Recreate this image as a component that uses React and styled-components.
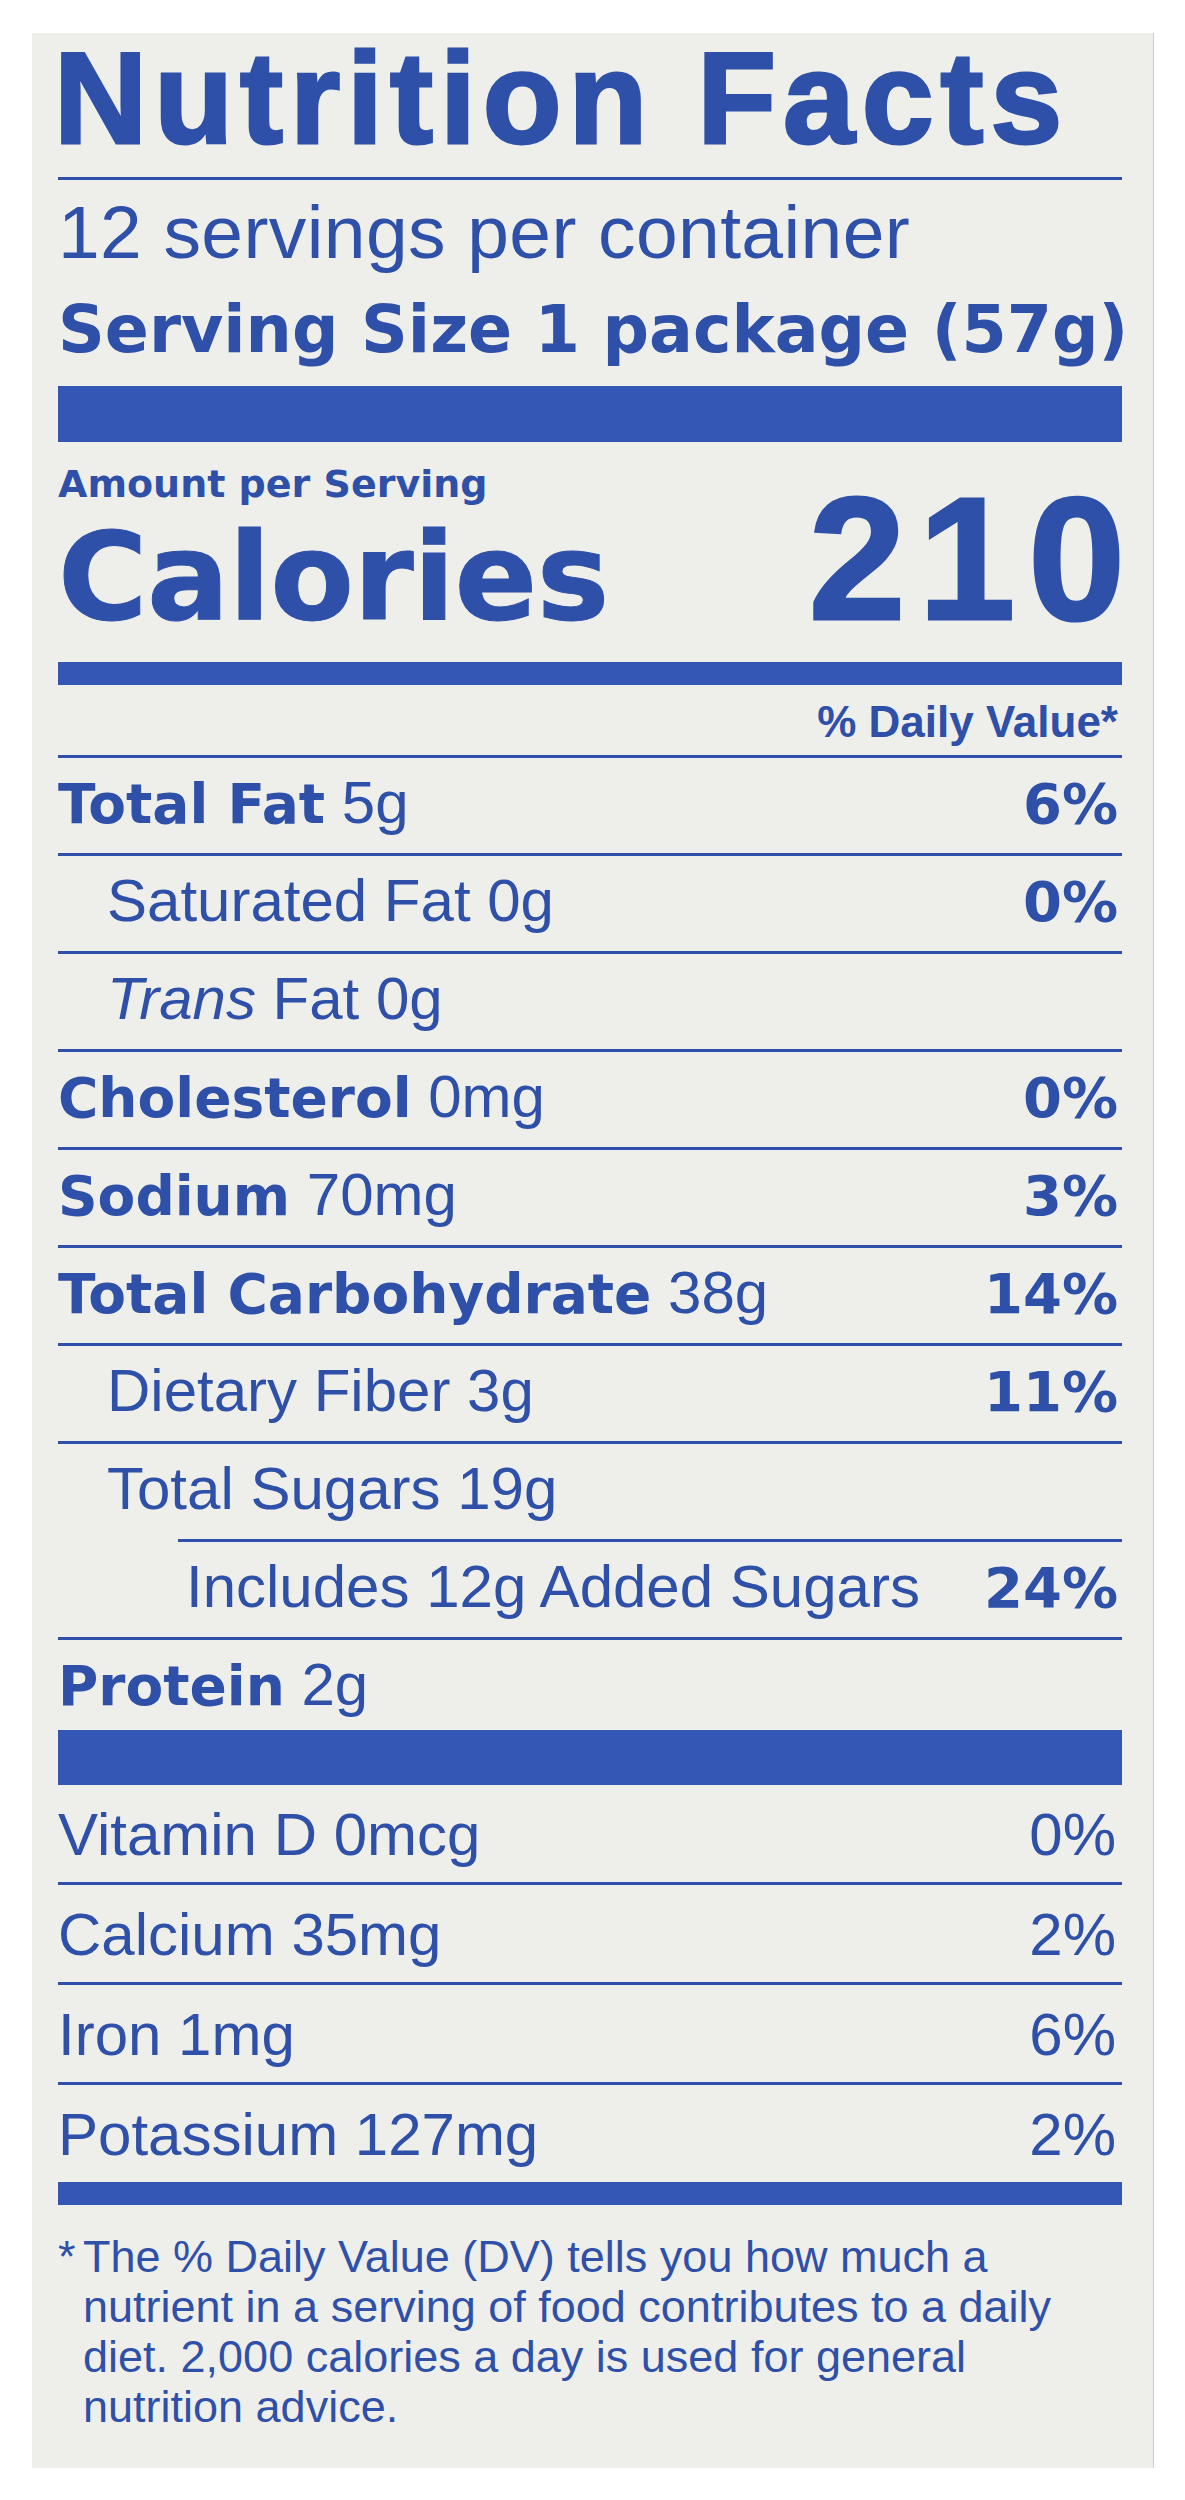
import React from 'react'
import styled, { createGlobalStyle } from 'styled-components'

const ink = '#2f50a8'
const barBlue = '#3457b6'
const paper = '#eeefeb'

const GlobalStyle = createGlobalStyle`
  body {
    margin: 0;
    background: #ffffff;
  }
`

const Page = styled.div`
  padding: 33px 0 32px 32px;
`

const Panel = styled.section`
  width: 1121px;
  box-sizing: border-box;
  padding: 0 31px 36px 26px;
  background: ${paper};
  color: ${ink};
  font-family: "Liberation Sans", Arial, sans-serif;
  box-shadow: 1px 0 0 #c9ccd3;
`

const Title = styled.h1`
  margin: 0 0 0 -4px;
  padding-top: 1px;
  font-size: 129px;
  line-height: 129px;
  font-weight: 700;
  letter-spacing: 7px;
  -webkit-text-stroke: 3px ${ink};
  white-space: nowrap;
`

const Rule = styled.div`
  height: 3px;
  margin-top: 14px;
  background: ${ink};
`

const Servings = styled.p`
  margin: 15px 0 0;
  font-size: 75px;
  line-height: 75px;
  letter-spacing: 0.4px;
  white-space: nowrap;
`

const ServingSize = styled.p`
  margin: 27px 0 0;
  font-family: "DejaVu Sans", sans-serif;
  font-weight: 700;
  font-size: 65px;
  line-height: 65px;
  white-space: nowrap;
`

const Bar = styled.div`
  height: ${p => p.$h}px;
  margin-top: ${p => p.$top || 0}px;
  background: ${barBlue};
`

const CaloriesBlock = styled.div`
  display: flex;
  justify-content: space-between;
  align-items: flex-end;
  margin-top: 23px;
`

const CaloriesLeft = styled.div`
  display: flex;
  flex-direction: column;
  gap: 13px;
`

const Amount = styled.div`
  font-family: "DejaVu Sans", sans-serif;
  font-weight: 700;
  font-size: 38px;
  line-height: 38px;
`

const CaloriesLabel = styled.div`
  font-family: "DejaVu Sans", sans-serif;
  font-weight: 700;
  font-size: 122px;
  line-height: 122px;
  letter-spacing: -0.5px;
  -webkit-text-stroke: 1px ${ink};
`

const CaloriesValue = styled.div`
  font-weight: 700;
  font-size: 174px;
  line-height: 158px;
  letter-spacing: 13px;
  margin-right: -16px;
  -webkit-text-stroke: 3px ${ink};
`

const DvHeader = styled.div`
  margin-top: 15px;
  padding: 0 4px 11px 0;
  text-align: right;
  font-weight: 700;
  font-size: 44px;
  line-height: 44px;
`

const Row = styled.div`
  display: flex;
  justify-content: space-between;
  align-items: baseline;
  box-sizing: border-box;
  height: ${p => p.$h || 98}px;
  margin-left: ${p => p.$inset || 0}px;
  padding: 15px 4px 0 ${p => p.$pad || 0}px;
  border-top: 3px solid ${ink};
  font-size: 60px;
  line-height: 60px;
  white-space: nowrap;
`

const Strong = styled.span`
  font-family: "DejaVu Sans", sans-serif;
  font-weight: 700;
  font-size: 55px;
`

const Italic = styled.span`
  font-style: italic;
`

const Dv = styled.span`
  font-family: "DejaVu Sans", sans-serif;
  font-weight: 700;
  font-size: 56px;
`

const VitRow = styled.div`
  display: flex;
  justify-content: space-between;
  align-items: baseline;
  box-sizing: border-box;
  height: ${p => (p.$first ? 97 : 100)}px;
  padding: 20px 6px 0 0;
  border-top: ${p => (p.$first ? 'none' : `3px solid ${ink}`)};
  font-size: 60px;
  line-height: 60px;
`

const Footnote = styled.div`
  display: flex;
  padding-top: 27px;
  font-size: 45px;
  line-height: 50px;
`

const Star = styled.span`
  flex: 0 0 25px;
`

const FootText = styled.p`
  margin: 0;
  white-space: nowrap;
`

const nutrients = [
  { bold: 'Total Fat', amount: '5g', dv: '6%' },
  { name: 'Saturated Fat 0g', dv: '0%', pad: 49 },
  { trans: true, pad: 49 },
  { bold: 'Cholesterol', amount: '0mg', dv: '0%' },
  { bold: 'Sodium', amount: '70mg', dv: '3%' },
  { bold: 'Total Carbohydrate', amount: '38g', dv: '14%' },
  { name: 'Dietary Fiber 3g', dv: '11%', pad: 49 },
  { name: 'Total Sugars 19g', pad: 49 },
  { name: 'Includes 12g Added Sugars', dv: '24%', inset: 120, pad: 8 },
  { bold: 'Protein', amount: '2g', h: 93 },
]

const vitamins = [
  { name: 'Vitamin D 0mcg', dv: '0%' },
  { name: 'Calcium 35mg', dv: '2%' },
  { name: 'Iron 1mg', dv: '6%' },
  { name: 'Potassium 127mg', dv: '2%' },
]

const NutrientLabel = ({ item }) => {
  if (item.trans) {
    return <span><Italic>Trans</Italic> Fat 0g</span>
  }
  if (item.bold) {
    return <span><Strong>{item.bold}</Strong> {item.amount}</span>
  }
  return <span>{item.name}</span>
}

const App = () => {
  return (
    <Page>
      <GlobalStyle />
      <Panel>
        <Title>Nutrition Facts</Title>
        <Rule />
        <Servings>12 servings per container</Servings>
        <ServingSize>Serving Size 1 package (57g)</ServingSize>
        <Bar $h={56} $top={24} />

        <CaloriesBlock>
          <CaloriesLeft>
            <Amount>Amount per Serving</Amount>
            <CaloriesLabel>Calories</CaloriesLabel>
          </CaloriesLeft>
          <CaloriesValue>210</CaloriesValue>
        </CaloriesBlock>
        <Bar $h={23} $top={24} />

        <DvHeader>% Daily Value*</DvHeader>
        {nutrients.map((item, i) => (
          <Row key={i} $pad={item.pad} $inset={item.inset} $h={item.h}>
            <NutrientLabel item={item} />
            {item.dv && <Dv>{item.dv}</Dv>}
          </Row>
        ))}
        <Bar $h={55} />

        {vitamins.map((v, i) => (
          <VitRow key={v.name} $first={i === 0}>
            <span>{v.name}</span>
            <span>{v.dv}</span>
          </VitRow>
        ))}
        <Bar $h={23} />

        <Footnote>
          <Star>*</Star>
          <FootText>
            The % Daily Value (DV) tells you how much a<br />
            nutrient in a serving of food contributes to a daily<br />
            diet. 2,000 calories a day is used for general<br />
            nutrition advice.
          </FootText>
        </Footnote>
      </Panel>
    </Page>
  )
}

export default App
